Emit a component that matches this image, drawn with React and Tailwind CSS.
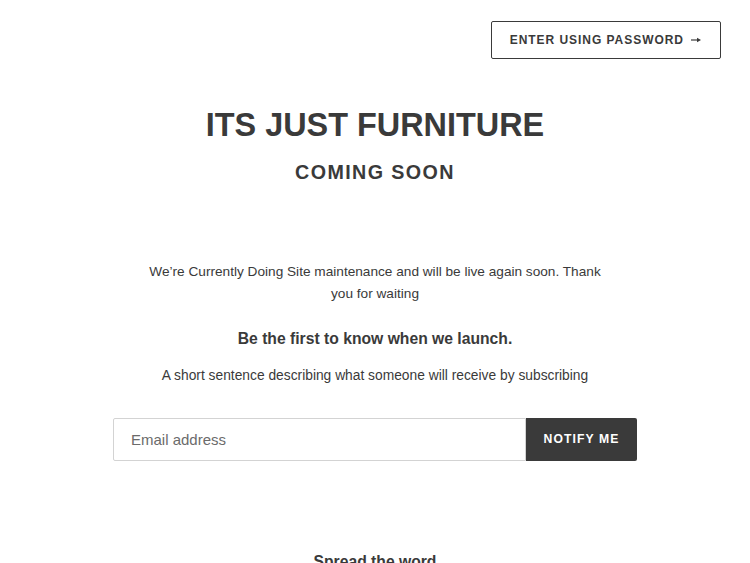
export default function App() {
  return (
    <div className="min-h-[563px] bg-white text-[#3a3a3a]" style={{ fontFamily: '"Liberation Sans", Arial, sans-serif' }}>
      <header className="flex justify-end pt-[21px] pr-[29px]">
        <button className="flex items-center h-[38px] pl-[18px] pr-[19px] border border-[#3a3a3a] rounded-[2px] text-[12px] font-bold uppercase tracking-[0.08em] text-[#3a3a3a] bg-white">
          <span>Enter using password</span>
          <svg width="10" height="6" viewBox="0 0 10 6" className="ml-[7px]" aria-hidden="true">
            <line x1="0" y1="3" x2="7" y2="3" stroke="#3a3a3a" strokeWidth="1.2" />
            <polygon points="6,0.8 10,3 6,5.2" fill="#3a3a3a" />
          </svg>
        </button>
      </header>
      <main className="flex flex-col items-center text-center">
        <h1 className="mt-[45px] text-[32.4px] leading-[43px] font-bold">ITS JUST FURNITURE</h1>
        <h2 className="mt-[13px] text-[19.7px] leading-[24px] font-bold uppercase tracking-[1.4px]">Coming Soon</h2>
        <p className="mt-[77px] w-[470px] text-[13.65px] leading-[22px]">
          We’re Currently Doing Site maintenance and will be live again soon. Thank you for waiting
        </p>
        <h3 className="mt-[22px] text-[15.7px] leading-[24px] font-bold">Be the first to know when we launch.</h3>
        <p className="mt-[14px] text-[13.8px] leading-[22px]">A short sentence describing what someone will receive by subscribing</p>
        <form className="mt-[31px] flex w-[524px]">
          <input
            type="email"
            placeholder="Email address"
            className="flex-1 h-[43px] border border-[#d3d3d3] rounded-l-[2px] px-[17px] text-[15px] text-[#3a3a3a] placeholder:text-[#6b6b6b] outline-none"
          />
          <button type="button" className="h-[43px] w-[111px] bg-[#3a3a3a] text-white text-[12.2px] font-bold uppercase tracking-[0.09em] rounded-r-[2px]">
            Notify me
          </button>
        </form>
        <h4 className="mt-[89px] text-[15.7px] leading-[24px] font-bold">Spread the word</h4>
      </main>
    </div>
  );
}
